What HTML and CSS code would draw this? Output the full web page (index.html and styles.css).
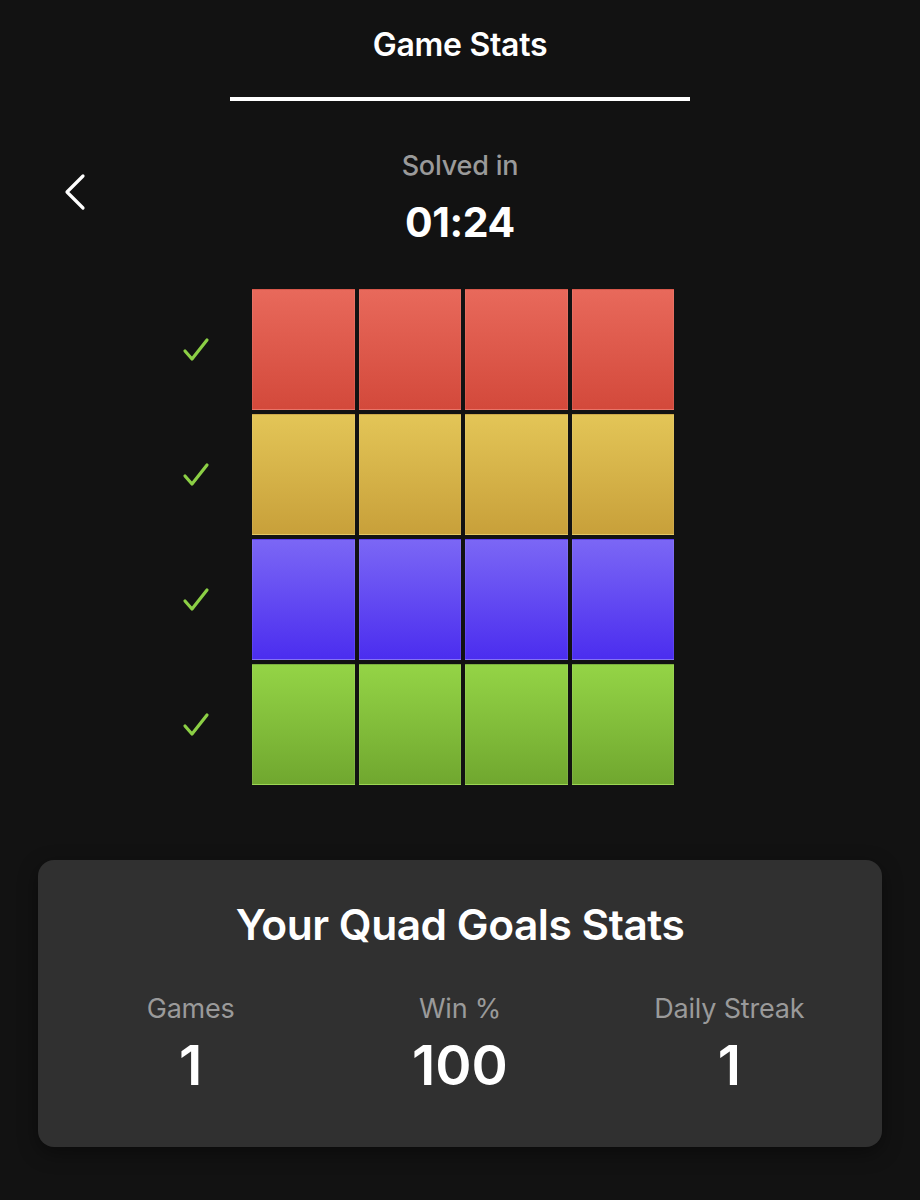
FILE: index.html
```html
<!DOCTYPE html>
<html lang="en">
<head>
    <meta charset="UTF-8">
    <meta name="viewport" content="width=device-width, initial-scale=1.0">
    <title>Game Stats</title>
    <link rel="stylesheet" href="styles.css">
</head>
<body>
    <header id="header">
        <h1>Game Stats</h1>
        <div class="tab-bar"></div>
    </header>

    <section id="solved">
        <button class="back" aria-label="Back">
            <svg width="24" height="38" viewBox="0 0 24 38">
                <path d="M20 3 L4 19 L20 35" fill="none" stroke="#fff" stroke-width="3.2" stroke-linecap="round" stroke-linejoin="round"/>
            </svg>
        </button>
        <div class="solved-text">
            <p class="solved-label">Solved in</p>
            <p class="solved-time">01:24</p>
        </div>
        <div></div>
    </section>

    <section id="board">
        <div class="row">
            <span class="check"><svg width="28" height="26" viewBox="0 0 28 26"><path d="M3 14 L10 22 L25 3" fill="none" stroke="#8ccf45" stroke-width="3.2" stroke-linecap="round" stroke-linejoin="round"/></svg></span>
            <div class="tile red"></div><div class="tile red"></div><div class="tile red"></div><div class="tile red"></div>
            <span class="spacer"></span>
        </div>
        <div class="row">
            <span class="check"><svg width="28" height="26" viewBox="0 0 28 26"><path d="M3 14 L10 22 L25 3" fill="none" stroke="#8ccf45" stroke-width="3.2" stroke-linecap="round" stroke-linejoin="round"/></svg></span>
            <div class="tile yellow"></div><div class="tile yellow"></div><div class="tile yellow"></div><div class="tile yellow"></div>
            <span class="spacer"></span>
        </div>
        <div class="row">
            <span class="check"><svg width="28" height="26" viewBox="0 0 28 26"><path d="M3 14 L10 22 L25 3" fill="none" stroke="#8ccf45" stroke-width="3.2" stroke-linecap="round" stroke-linejoin="round"/></svg></span>
            <div class="tile purple"></div><div class="tile purple"></div><div class="tile purple"></div><div class="tile purple"></div>
            <span class="spacer"></span>
        </div>
        <div class="row">
            <span class="check"><svg width="28" height="26" viewBox="0 0 28 26"><path d="M3 14 L10 22 L25 3" fill="none" stroke="#8ccf45" stroke-width="3.2" stroke-linecap="round" stroke-linejoin="round"/></svg></span>
            <div class="tile green"></div><div class="tile green"></div><div class="tile green"></div><div class="tile green"></div>
            <span class="spacer"></span>
        </div>
    </section>

    <section id="stats">
        <h2>Your Quad Goals Stats</h2>
        <div class="stat-grid">
            <div class="stat">
                <span class="stat-label">Games</span>
                <span class="stat-value">1</span>
            </div>
            <div class="stat">
                <span class="stat-label">Win %</span>
                <span class="stat-value">100</span>
            </div>
            <div class="stat">
                <span class="stat-label">Daily Streak</span>
                <span class="stat-value">1</span>
            </div>
        </div>
    </section>
</body>
</html>
```

FILE: styles.css
```css
body {
    margin: 0;
    background-color: #121212;
    color: #fff;
    font-family: Inter, "Noto Sans", sans-serif;
    text-align: center;
    min-height: 1200px;
}
#header {
    display: flex;
    flex-direction: column;
    align-items: center;
    padding-top: 28px;
}
h1 {
    margin: 0;
    font-size: 32px;
    line-height: 34px;
    font-weight: 600;
    letter-spacing: -0.3px;
}
.tab-bar {
    width: 460px;
    height: 4px;
    margin-top: 35px;
    background-color: #fff;
}
#solved {
    display: grid;
    grid-template-columns: 1fr auto 1fr;
    margin-top: 50px;
}
.back {
    justify-self: start;
    margin: 22px 0 0 63px;
    padding: 0;
    width: 24px;
    height: 38px;
    border: none;
    background: none;
}
.back svg {
    display: block;
}
.solved-text p {
    margin: 0;
}
.solved-label {
    font-size: 27px;
    line-height: 30px;
    font-weight: 500;
    color: #9a9a9a;
    letter-spacing: -0.2px;
}
.solved-time {
    margin-top: 19px !important;
    font-size: 41px;
    line-height: 44px;
    font-weight: 700;
    letter-spacing: -0.4px;
}
#board {
    display: flex;
    flex-direction: column;
    align-items: center;
    gap: 4px;
    margin-top: 45px;
}
.row {
    display: flex;
    gap: 4px;
    height: 121px;
}
.check, .spacer {
    display: flex;
    align-items: center;
    justify-content: center;
}
.check {
    width: 112px;
    margin-right: -2px;
    padding-left: 4px;
    box-sizing: border-box;
}
.spacer {
    width: 106px;
    margin-left: -2px;
}
.tile {
    width: 102.5px;
    height: 121px;
    box-sizing: border-box;
    border: 1px solid rgba(255, 255, 255, 0.08);
}
.red {
    background: linear-gradient(#e8695b, #d3493b);
}
.yellow {
    background: linear-gradient(#e3c557, #c8a03a);
}
.purple {
    background: linear-gradient(#7b67f5, #4b2def);
}
.green {
    background: linear-gradient(#94d446, #70a72f);
}
#stats {
    margin: 75px 38px 0;
    padding: 43px 18px 52px;
    background-color: #303030;
    border-radius: 16px;
    box-shadow: 0 6px 20px rgba(0, 0, 0, 0.4);
}
h2 {
    margin: 0;
    font-size: 42.5px;
    line-height: 44px;
    font-weight: 600;
    letter-spacing: -0.5px;
}
.stat-grid {
    display: grid;
    grid-template-columns: repeat(3, 1fr);
    margin-top: 47px;
}
.stat {
    display: flex;
    flex-direction: column;
    align-items: center;
}
.stat-label {
    font-size: 27px;
    line-height: 30px;
    color: #9a9a9a;
    letter-spacing: -0.2px;
}
.stat-value {
    margin-top: 11px;
    font-size: 55px;
    line-height: 60px;
    font-weight: 600;
}
```
